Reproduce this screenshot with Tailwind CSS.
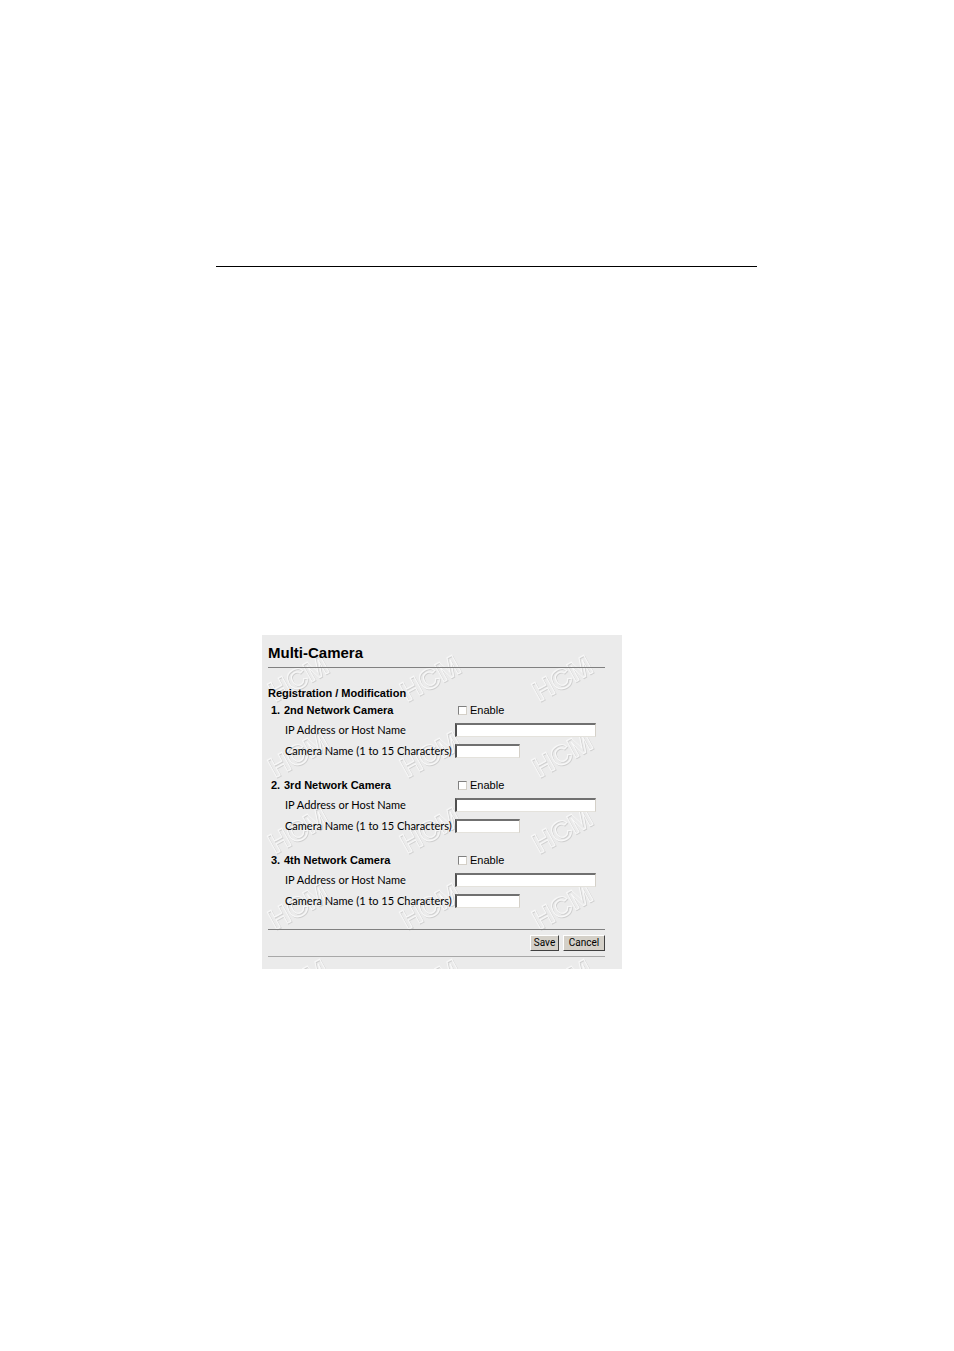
<!DOCTYPE html>
<html lang="en">
<head>
    <meta charset="UTF-8">
    <meta name="viewport" content="width=device-width, initial-scale=1.0">
    <title>Multi-Camera</title>
    <script src="https://cdn.jsdelivr.net/npm/@tailwindcss/browser@4"></script>
</head>
<body class="bg-white text-black font-['Liberation_Sans',Arial,sans-serif]">

<main class="pt-[266px] pl-[216px] pr-[197px] pb-96">
    <hr class="border-t border-black">

    <form method="post" action="" class="relative mt-[368px] ml-[46px] w-[360px] bg-[#ebebeb] pl-[6px] pr-[17px] pb-3 text-[11px] leading-5">
        <!-- HCM watermark tile -->
        <svg class="absolute inset-0 w-full h-full" aria-hidden="true">
            <defs>
                <pattern id="hcm" width="132" height="76" patternUnits="userSpaceOnUse">
                    <g font-size="28" font-weight="bold" fill="none" stroke-width="1">
                        <text transform="translate(14 68) rotate(-29)" stroke="#d0d0d0">HCM</text>
                        <text transform="translate(13 67) rotate(-29)" stroke="#f8f8f8">HCM</text>
                    </g>
                </pattern>
            </defs>
            <rect width="100%" height="100%" fill="url(#hcm)"/>
        </svg>

        <div class="relative">
            <h1 class="pt-2 h-8 text-[15px] leading-5 font-bold">Multi-Camera</h1>
            <hr class="border-t border-[#808080]">
            <h2 class="mt-[17px] h-[15px] leading-4 font-bold">Registration / Modification</h2>

            <div class="grid gap-[14px]">
                <fieldset class="grid grid-cols-[16px_171px_1fr]">
                    <div class="col-span-2 flex font-bold"><span class="w-4 pl-[3px]">1.</span>2nd Network Camera</div>
                    <label class="flex items-center gap-[3px] pl-[3px]">
                        <input type="checkbox" name="enable2" class="appearance-none size-[9px] bg-white border border-t-[#808080] border-l-[#808080] border-b-[#d4d0c8] border-r-[#d4d0c8]">Enable
                    </label>
                    <label for="host2" class="col-start-2 pl-px font-[Lato,sans-serif]">IP Address or Host Name</label>
                    <input type="text" id="host2" name="host2" class="self-center w-[141px] h-[14px] px-1 bg-white border-t-2 border-l-2 border-b border-r border-t-[#707070] border-l-[#505050] border-b-[#e4e2dc] border-r-[#d4d0c8]">
                    <label for="name2" class="col-start-2 pl-px leading-[21px] whitespace-nowrap font-[Lato,sans-serif]">Camera Name (1 to 15 Characters)</label>
                    <input type="text" id="name2" name="name2" maxlength="15" class="self-center w-[65px] h-[14px] px-1 bg-white border-t-2 border-l-2 border-b border-r border-t-[#707070] border-l-[#505050] border-b-[#e4e2dc] border-r-[#d4d0c8]">
                </fieldset>

                <fieldset class="grid grid-cols-[16px_171px_1fr]">
                    <div class="col-span-2 flex font-bold"><span class="w-4 pl-[3px]">2.</span>3rd Network Camera</div>
                    <label class="flex items-center gap-[3px] pl-[3px]">
                        <input type="checkbox" name="enable3" class="appearance-none size-[9px] bg-white border border-t-[#808080] border-l-[#808080] border-b-[#d4d0c8] border-r-[#d4d0c8]">Enable
                    </label>
                    <label for="host3" class="col-start-2 pl-px font-[Lato,sans-serif]">IP Address or Host Name</label>
                    <input type="text" id="host3" name="host3" class="self-center w-[141px] h-[14px] px-1 bg-white border-t-2 border-l-2 border-b border-r border-t-[#707070] border-l-[#505050] border-b-[#e4e2dc] border-r-[#d4d0c8]">
                    <label for="name3" class="col-start-2 pl-px leading-[21px] whitespace-nowrap font-[Lato,sans-serif]">Camera Name (1 to 15 Characters)</label>
                    <input type="text" id="name3" name="name3" maxlength="15" class="self-center w-[65px] h-[14px] px-1 bg-white border-t-2 border-l-2 border-b border-r border-t-[#707070] border-l-[#505050] border-b-[#e4e2dc] border-r-[#d4d0c8]">
                </fieldset>

                <fieldset class="grid grid-cols-[16px_171px_1fr]">
                    <div class="col-span-2 flex font-bold"><span class="w-4 pl-[3px]">3.</span>4th Network Camera</div>
                    <label class="flex items-center gap-[3px] pl-[3px]">
                        <input type="checkbox" name="enable4" class="appearance-none size-[9px] bg-white border border-t-[#808080] border-l-[#808080] border-b-[#d4d0c8] border-r-[#d4d0c8]">Enable
                    </label>
                    <label for="host4" class="col-start-2 pl-px font-[Lato,sans-serif]">IP Address or Host Name</label>
                    <input type="text" id="host4" name="host4" class="self-center w-[141px] h-[14px] px-1 bg-white border-t-2 border-l-2 border-b border-r border-t-[#707070] border-l-[#505050] border-b-[#e4e2dc] border-r-[#d4d0c8]">
                    <label for="name4" class="col-start-2 pl-px leading-[21px] whitespace-nowrap font-[Lato,sans-serif]">Camera Name (1 to 15 Characters)</label>
                    <input type="text" id="name4" name="name4" maxlength="15" class="self-center w-[65px] h-[14px] px-1 bg-white border-t-2 border-l-2 border-b border-r border-t-[#707070] border-l-[#505050] border-b-[#e4e2dc] border-r-[#d4d0c8]">
                </fieldset>
            </div>

            <hr class="mt-[18px] border-t border-[#808080]">
            <div class="flex justify-end gap-1 py-[5px]">
                <button type="submit" class="w-[29px] h-4 bg-[#d4d0c8] border border-t-white border-l-white border-b-[#404040] border-r-[#404040] text-[10px] leading-[14px] font-[Roboto,sans-serif]">Save</button>
                <button type="reset" class="w-[42px] h-4 bg-[#d4d0c8] border border-t-white border-l-white border-b-[#404040] border-r-[#404040] text-[10px] leading-[14px] font-[Roboto,sans-serif]">Cancel</button>
            </div>
            <hr class="border-t border-[#a8a8a8]">
        </div>
    </form>
</main>

</body>
</html>
